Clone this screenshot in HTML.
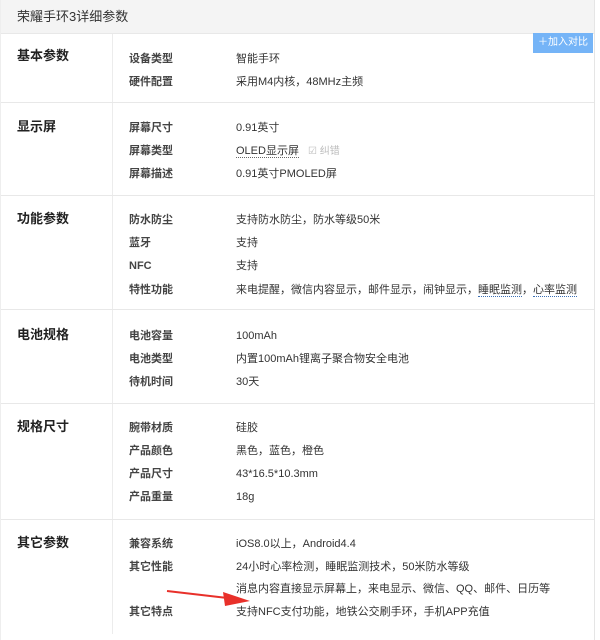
<!DOCTYPE html>
<html><head><meta charset="utf-8"><style>
body{margin:0;width:600px;height:618px;overflow:hidden;background:#fff;font-family:"Liberation Sans","Noto Sans CJK SC",sans-serif;color:#333;font-size:11px}
div{line-height:14px}
.wrap{position:absolute;left:0;top:0;width:593px;height:640px;border-right:1px solid #e5e5e5;border-left:1px solid #eee}
.hd{position:absolute;left:0;top:0;width:593px;height:33px;background:#f4f4f4;border-bottom:1px solid #e8e8e8}
.hd span{position:absolute;left:16px;top:9px;font-size:13px;color:#333;line-height:16px}
.btn{position:absolute;left:533px;top:33px;width:60px;height:20px;background:#75b4f7;color:#fff;font-size:10px;line-height:20px;text-align:center}
.sec{position:absolute;left:0;width:593px;border-top:1px solid #e8e8e8}
.vline{position:absolute;left:111px;top:34px;width:1px;height:600px;background:#ececec}
.t{position:absolute;left:16px;font-weight:bold;font-size:13px;color:#222;line-height:16px;margin-top:1px}
.l{position:absolute;left:128px;font-weight:bold;color:#444;font-size:11px;margin-top:2px}
.v{position:absolute;left:235px;font-size:11px;color:#333;margin-top:2px}
.u{border-bottom:1px dotted #3a6fb5}
</style></head><body>
<div class="wrap">
<div class="hd"><span>荣耀手环3详细参数</span></div>
<div class="vline"></div>
<div class="sec" style="top:102px"></div>
<div class="sec" style="top:195px"></div>
<div class="sec" style="top:309px"></div>
<div class="sec" style="top:403px"></div>
<div class="sec" style="top:519px"></div>

<div class="t" style="top:47px">基本参数</div>
<div class="l" style="top:50px">设备类型</div><div class="v" style="top:50px">智能手环</div>
<div class="l" style="top:73px">硬件配置</div><div class="v" style="top:73px">采用M4内核，48MHz主频</div>

<div class="t" style="top:118px">显示屏</div>
<div class="l" style="top:119px">屏幕尺寸</div><div class="v" style="top:119px">0.91英寸</div>
<div class="l" style="top:142px">屏幕类型</div><div class="v" style="top:142px"><span class="u" style="border-color:#666">OLED显示屏</span> <span style="color:#bbb;font-size:10px;margin-left:6px">☑ 纠错</span></div>
<div class="l" style="top:165px">屏幕描述</div><div class="v" style="top:165px">0.91英寸PMOLED屏</div>

<div class="t" style="top:210px">功能参数</div>
<div class="l" style="top:211px">防水防尘</div><div class="v" style="top:211px">支持防水防尘，防水等级50米</div>
<div class="l" style="top:234px">蓝牙</div><div class="v" style="top:234px">支持</div>
<div class="l" style="top:257px">NFC</div><div class="v" style="top:257px">支持</div>
<div class="l" style="top:281px">特性功能</div><div class="v" style="top:281px">来电提醒，微信内容显示，邮件显示，闹钟显示，<span class="u">睡眠监测</span>，<span class="u">心率监测</span></div>

<div class="t" style="top:326px">电池规格</div>
<div class="l" style="top:327px">电池容量</div><div class="v" style="top:327px">100mAh</div>
<div class="l" style="top:350px">电池类型</div><div class="v" style="top:350px">内置100mAh锂离子聚合物安全电池</div>
<div class="l" style="top:373px">待机时间</div><div class="v" style="top:373px">30天</div>

<div class="t" style="top:418px">规格尺寸</div>
<div class="l" style="top:419px">腕带材质</div><div class="v" style="top:419px">硅胶</div>
<div class="l" style="top:442px">产品颜色</div><div class="v" style="top:442px">黑色，蓝色，橙色</div>
<div class="l" style="top:465px">产品尺寸</div><div class="v" style="top:465px">43*16.5*10.3mm</div>
<div class="l" style="top:488px">产品重量</div><div class="v" style="top:488px">18g</div>

<div class="t" style="top:534px">其它参数</div>
<div class="l" style="top:535px">兼容系统</div><div class="v" style="top:535px">iOS8.0以上，Android4.4</div>
<div class="l" style="top:558px">其它性能</div><div class="v" style="top:558px">24小时心率检测，睡眠监测技术，50米防水等级</div>
<div class="v" style="top:580px">消息内容直接显示屏幕上，来电显示、微信、QQ、邮件、日历等</div>
<div class="l" style="top:603px">其它特点</div><div class="v" style="top:603px">支持NFC支付功能，地铁公交刷手环，手机APP充值</div>
</div>
<div class="btn">＋加入对比</div>
<svg style="position:absolute;left:0;top:0" width="600" height="618"><path d="M167 591 L236 599" stroke="#e8302a" stroke-width="2"/><path d="M223 592 L250 601 L225 606 Z" fill="#e8302a"/></svg>
</body></html>
